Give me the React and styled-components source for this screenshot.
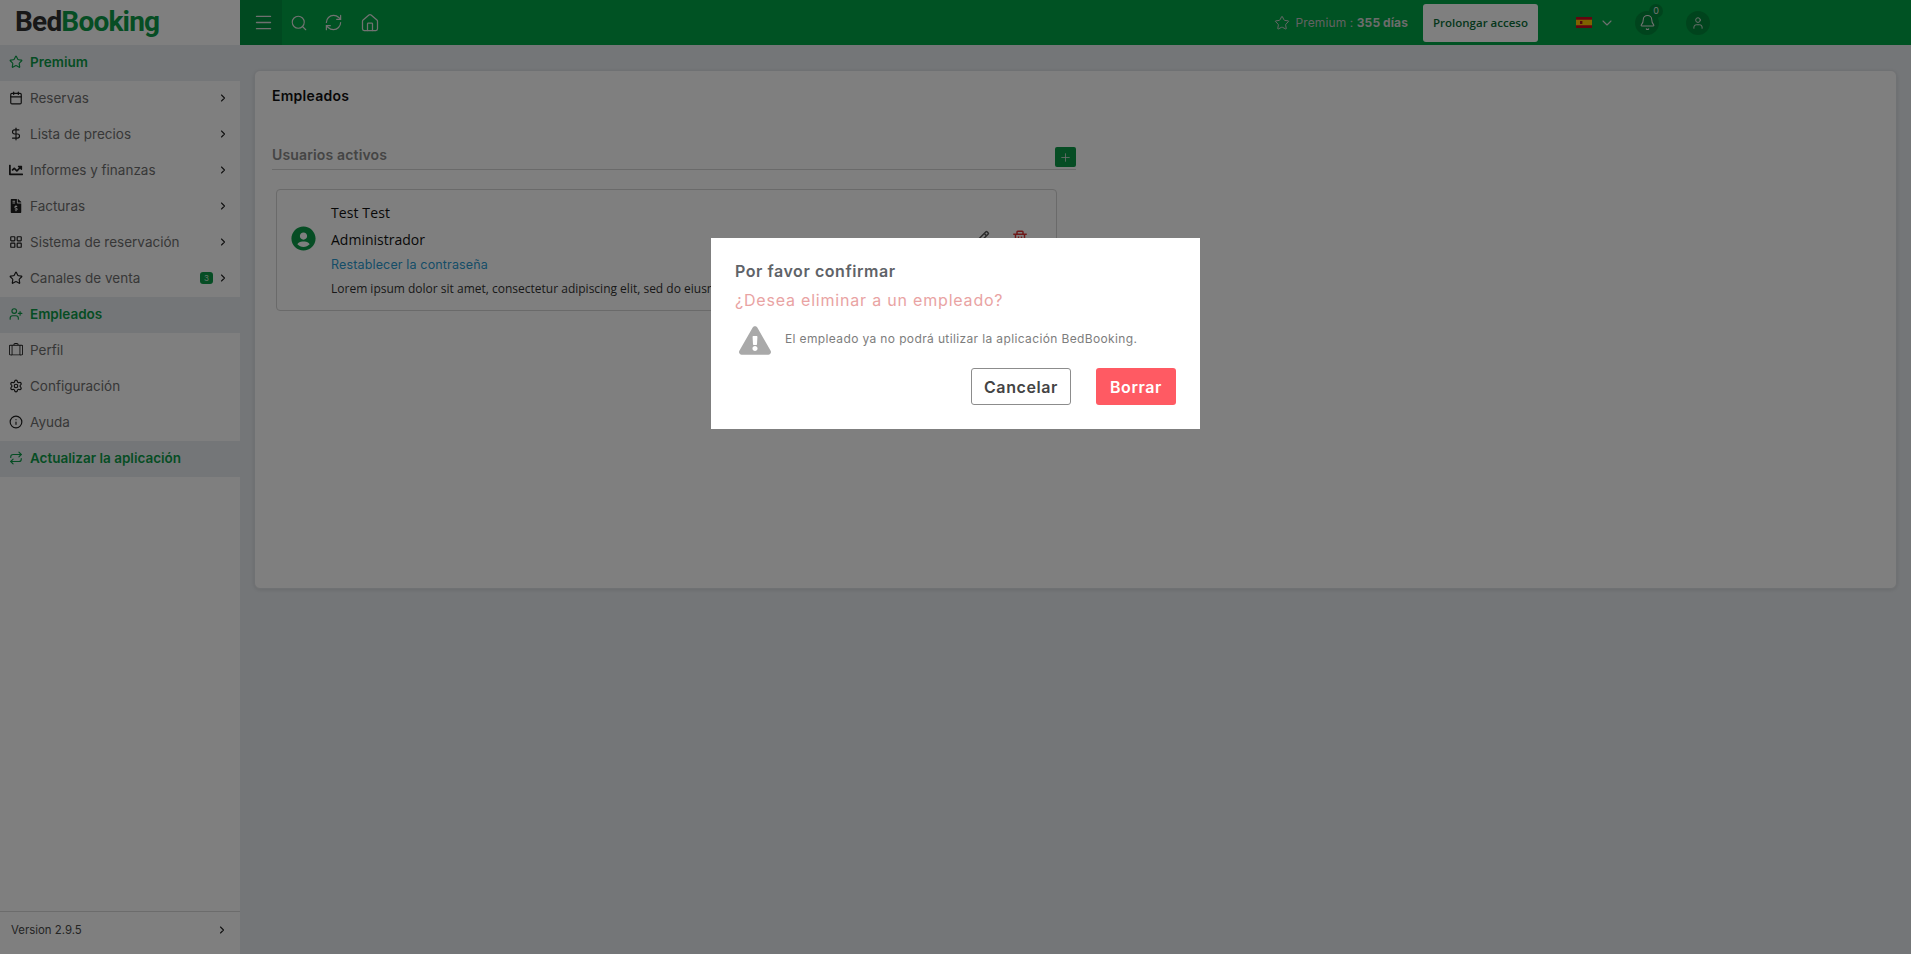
import React from "react";
import styled, { createGlobalStyle } from "styled-components";
import { Star, Calendar, DollarSign, LayoutGrid, UserPlus, Settings, Info, Repeat, Menu, Search, RefreshCw, Home, Bell, User, ChevronRight, ChevronDown, Plus } from "lucide-react";
import { BiPencil, BiTrash, BiSolidUserCircle } from "react-icons/bi";
import { BsSuitcaseLg } from "react-icons/bs";
import { FaFileInvoiceDollar, FaExclamationTriangle, FaChartLine } from "react-icons/fa";

const UI = `Inter, "Liberation Sans", sans-serif`;
const BODY = `"Open Sans", "Noto Sans", sans-serif`;

const Global = createGlobalStyle`
  html, body { margin: 0; padding: 0; height: 100%; overflow: hidden; background: #e9edf1; }
  * { box-sizing: border-box; }
  #root { height: 100%; }
`;

const Shell = styled.div`
  display: grid;
  grid-template-columns: 240px 1fr;
  height: 954px;
  font-family: ${UI};
  color: #7f7f7f;
`;

const Sidebar = styled.aside`
  background: #fff;
  display: flex;
  flex-direction: column;
  height: 954px;
`;

const Logo = styled.div`
  height: 45px;
  padding: 0 0 2px 15px;
  display: flex;
  align-items: center;
  font-family: Roboto, sans-serif;
  font-weight: 700;
  font-size: 28px;
  letter-spacing: -0.8px;
  color: #303030;
`;

const LogoAccent = styled.span`
  color: #0c9b48;
`;

const Nav = styled.nav`
  display: flex;
  flex-direction: column;
  flex: 1;
`;

const NavRow = styled.div`
  height: 36px;
  display: flex;
  align-items: center;
  padding: 0 11px 2px 9px;
  font-size: 13.5px;
  font-weight: ${(p) => (p.$active ? 600 : 400)};
  color: ${(p) => (p.$active ? "#0c9b48" : "#6f6f6f")};
  background: ${(p) => (p.$active ? "#e9edf1" : "transparent")};
  & > svg:first-child { width: 14px; height: 14px; flex: none; color: ${(p) => (p.$active ? "#0c9b48" : "#1e1e1e")}; }
`;

const NavLabel = styled.span`
  margin-left: 7px;
  flex: 1;
  white-space: nowrap;
`;

const Chevron = styled(ChevronRight).attrs({ size: 12, strokeWidth: 2.2 })`
  color: #222;
  flex: none;
`;

const CountBadge = styled.span`
  width: 13px;
  height: 12px;
  border-radius: 3px;
  background: #0c9b48;
  color: #cfe8d8;
  font-size: 8px;
  line-height: 12px;
  text-align: center;
  margin-right: 4px;
`;

const Footer = styled.div`
  height: 43px;
  border-top: 1px solid #d8d8d8;
  display: flex;
  align-items: center;
  justify-content: space-between;
  padding: 0 12px 6px 11px;
  font-size: 11.4px;
  color: #4a4a4a;
`;

const Main = styled.main`
  display: flex;
  flex-direction: column;
  min-width: 0;
`;

const Topbar = styled.header`
  height: 45px;
  background: #00a446;
  display: flex;
  align-items: center;
  padding-right: 201px;
`;

const Burger = styled.div`
  width: 42px;
  height: 45px;
  background: #009340;
  display: flex;
  align-items: center;
  justify-content: center;
  padding-left: 5px;
  color: #e0e0e0;
`;

const ToolIcons = styled.div`
  display: flex;
  align-items: center;
  gap: 16px;
  padding-left: 8px;
  color: #e4e4e4;
  flex: 1;
  & > svg { display: block; }
`;

const PremiumInfo = styled.div`
  display: flex;
  align-items: center;
  gap: 6px;
  font-size: 12px;
  letter-spacing: 0.1px;
  color: #c4c4c4;
  margin-right: 15px;
  & > svg { color: #d0d0d0; }
  & b { font-weight: 700; color: #d8d8d8; }
`;

const ExtendButton = styled.button`
  width: 115px;
  height: 38px;
  border: 0;
  border-radius: 3px;
  background: #fff;
  color: #0b6e38;
  font-family: ${BODY};
  font-weight: 600;
  font-size: 11.5px;
  padding: 0;
  margin-right: 38px;
`;

const FlagWrap = styled.div`
  display: flex;
  align-items: center;
  gap: 7px;
  margin-right: 20px;
  color: #e0e0e0;
  & > svg:first-child { display: block; }
`;

const RoundIcon = styled.div`
  position: relative;
  width: 24px;
  height: 24px;
  border-radius: 50%;
  background: #00893a;
  color: #e4e4e4;
  display: flex;
  align-items: center;
  justify-content: center;
  margin-left: ${(p) => p.$gap || 0}px;
`;

const BellCount = styled.span`
  position: absolute;
  top: -7px;
  right: -4px;
  width: 14px;
  height: 14px;
  border-radius: 50%;
  background: #00893a;
  color: #e4e4e4;
  font-size: 9px;
  line-height: 14px;
  text-align: center;
`;

const Content = styled.div`
  flex: 1;
  padding: 25px 14px 0;
`;

const Panel = styled.section`
  height: 519px;
  background: #fff;
  border-radius: 6px;
  border: 1px solid #dfe2e6;
  box-shadow: 0 1px 4px rgba(0, 0, 0, 0.1);
  padding: 16px 17px;
`;

const PanelTitle = styled.h1`
  margin: 0;
  font-size: 14px;
  line-height: 17px;
  font-weight: 600;
  letter-spacing: 0.25px;
  color: #111;
`;

const Section = styled.div`
  width: 804px;
  margin-top: 36px;
`;

const SectionHead = styled.div`
  height: 30px;
  display: flex;
  align-items: flex-end;
  justify-content: space-between;
  border-bottom: 1px solid #d4d4d4;
  padding-bottom: 6px;
  font-size: 14px;
  font-weight: 600;
  letter-spacing: 0.15px;
  color: #8a8a8a;
  line-height: 17px;
`;

const AddButton = styled.button`
  width: 21px;
  height: 20px;
  border: 0;
  border-radius: 2px;
  background: #0c9b48;
  color: #dcdcdc;
  padding: 0;
  display: flex;
  align-items: center;
  justify-content: center;
  margin-bottom: -4px;
`;

const EmployeeCard = styled.article`
  width: 781px;
  height: 122px;
  margin: 19px 0 0 4px;
  border: 1px solid #d4d4d4;
  border-radius: 4px;
  display: flex;
  align-items: center;
  padding: 0 15px;
`;

const Avatar = styled(BiSolidUserCircle)`
  flex: none;
  width: 29px;
  height: 29px;
  color: #0c9b48;
  margin: -24px 13px 0 -3px;
`;

const EmployeeInfo = styled.div`
  flex: 1;
  min-width: 0;
  display: flex;
  flex-direction: column;
  font-family: ${BODY};
  color: #222;
`;

const EmployeeName = styled.div`
  font-size: 14px;
  font-weight: 500;
  letter-spacing: 0.1px;
  line-height: 20px;
  margin-top: -1px;
  color: #111;
`;

const EmployeeRole = styled.div`
  font-size: 14px;
  line-height: 20px;
  margin-top: 7px;
  color: #111;
`;

const ResetLink = styled.a`
  font-family: ${UI};
  font-size: 12.5px;
  line-height: 16px;
  margin-top: 7px;
  letter-spacing: 0.15px;
  color: #2b9ad0;
`;

const Lorem = styled.div`
  font-size: 12px;
  line-height: 16px;
  margin-top: 8px;
  color: #333;
  white-space: nowrap;
`;

const CardActions = styled.div`
  flex: none;
  display: flex;
  gap: 20px;
  margin: -24px 12px 0 16px;
  font-size: 18px;
`;

const Overlay = styled.div`
  position: fixed;
  inset: 0;
  background: rgba(0, 0, 0, 0.5);
  display: flex;
  justify-content: center;
  align-items: flex-start;
  padding-top: 238px;
`;

const Modal = styled.div`
  width: 489px;
  height: 191px;
  background: #fff;
  padding: 24px 24px 0 24px;
  font-family: ${UI};
  color: #5f6368;
`;

const ModalTitle = styled.h2`
  margin: 0;
  font-size: 16px;
  line-height: 19px;
  font-weight: 600;
  letter-spacing: 0.55px;
  color: #5f6368;
`;

const ModalQuestion = styled.div`
  margin-top: 10px;
  font-size: 16px;
  line-height: 19px;
  letter-spacing: 0.8px;
  color: #e9a3a3;
`;

const WarningRow = styled.div`
  margin-top: 14px;
  display: flex;
  align-items: center;
  height: 32px;
  padding-left: 4px;
  font-size: 12px;
  letter-spacing: 0.37px;
  color: #7d7d7d;
  & > svg { width: 32px; height: 29px; color: #a9a9a9; margin-right: 14px; flex: none; }
  & > span { padding-bottom: 3px; }
`;

const ModalActions = styled.div`
  margin-top: 12px;
  display: flex;
  justify-content: flex-end;
  gap: 25px;
`;

const ModalButton = styled.button`
  width: ${(p) => (p.$danger ? 80 : 100)}px;
  height: 37px;
  border-radius: 3px;
  border: ${(p) => (p.$danger ? "0" : "1px solid #8c8c8c")};
  background: ${(p) => (p.$danger ? "#ff5a63" : "#fff")};
  color: ${(p) => (p.$danger ? "#fff" : "#444")};
  font-family: ${UI};
  font-size: 16px;
  font-weight: 600;
  letter-spacing: 0.6px;
  padding: 0;
`;

const HomeIcon = styled(Home).attrs({ size: 20, strokeWidth: 1.5 })`
  margin-left: 1px;
`;

const SpainFlag = () => (
  <svg width="16" height="11" viewBox="0 0 16 11" aria-hidden="true">
    <rect width="16" height="11" fill="#c60b1e" />
    <rect y="2.75" width="16" height="5.5" fill="#ffc400" />
    <rect x="4" y="4" width="2.4" height="3" fill="#ad1519" />
  </svg>
);

const menu = [
  { icon: Star, label: "Premium", active: true },
  { icon: Calendar, label: "Reservas", more: true },
  { icon: DollarSign, label: "Lista de precios", more: true },
  { icon: FaChartLine, label: "Informes y finanzas", more: true },
  { icon: FaFileInvoiceDollar, label: "Facturas", more: true },
  { icon: LayoutGrid, label: "Sistema de reservación", more: true },
  { icon: Star, label: "Canales de venta", more: true, count: 3 },
  { icon: UserPlus, label: "Empleados", active: true },
  { icon: BsSuitcaseLg, label: "Perfil" },
  { icon: Settings, label: "Configuración" },
  { icon: Info, label: "Ayuda" },
  { icon: Repeat, label: "Actualizar la aplicación", active: true },
];

export default function App() {
  return (
    <>
      <Global />
      <Shell>
        <Sidebar>
          <Logo>Bed<LogoAccent>Booking</LogoAccent></Logo>
          <Nav>
            {menu.map(({ icon: Icon, label, active, more, count }) => (
              <NavRow key={label} $active={active}>
                <Icon />
                <NavLabel>{label}</NavLabel>
                {count ? <CountBadge>{count}</CountBadge> : null}
                {more ? <Chevron /> : null}
              </NavRow>
            ))}
          </Nav>
          <Footer>
            <span>Version 2.9.5</span>
            <Chevron />
          </Footer>
        </Sidebar>
        <Main>
          <Topbar>
            <Burger><Menu size={21} strokeWidth={1.6} /></Burger>
            <ToolIcons>
              <Search size={18} strokeWidth={1.5} />
              <RefreshCw size={19} strokeWidth={1.5} />
              <HomeIcon />
            </ToolIcons>
            <PremiumInfo>
              <Star size={16} strokeWidth={1.5} />
              <span>Premium : <b>355 días</b></span>
            </PremiumInfo>
            <ExtendButton>Prolongar acceso</ExtendButton>
            <FlagWrap>
              <SpainFlag />
              <ChevronDown size={16} strokeWidth={1.6} />
            </FlagWrap>
            <RoundIcon>
              <Bell size={17} strokeWidth={1.5} />
              <BellCount>0</BellCount>
            </RoundIcon>
            <RoundIcon $gap={27}><User size={14} strokeWidth={1.6} /></RoundIcon>
          </Topbar>
          <Content>
            <Panel>
              <PanelTitle>Empleados</PanelTitle>
              <Section>
                <SectionHead>
                  <span>Usuarios activos</span>
                  <AddButton><Plus size={13} strokeWidth={1.5} /></AddButton>
                </SectionHead>
                <EmployeeCard>
                  <Avatar />
                  <EmployeeInfo>
                    <EmployeeName>Test Test</EmployeeName>
                    <EmployeeRole>Administrador</EmployeeRole>
                    <ResetLink>Restablecer la contraseña</ResetLink>
                    <Lorem>Lorem ipsum dolor sit amet, consectetur adipiscing elit, sed do eiusmod tempor incididunt ut labore</Lorem>
                  </EmployeeInfo>
                  <CardActions>
                    <BiPencil color="#555" />
                    <BiTrash color="#d33" />
                  </CardActions>
                </EmployeeCard>
              </Section>
            </Panel>
          </Content>
        </Main>
      </Shell>
      <Overlay>
        <Modal>
          <ModalTitle>Por favor confirmar</ModalTitle>
          <ModalQuestion>¿Desea eliminar a un empleado?</ModalQuestion>
          <WarningRow>
            <FaExclamationTriangle />
            <span>El empleado ya no podrá utilizar la aplicación BedBooking.</span>
          </WarningRow>
          <ModalActions>
            <ModalButton>Cancelar</ModalButton>
            <ModalButton $danger>Borrar</ModalButton>
          </ModalActions>
        </Modal>
      </Overlay>
    </>
  );
}
